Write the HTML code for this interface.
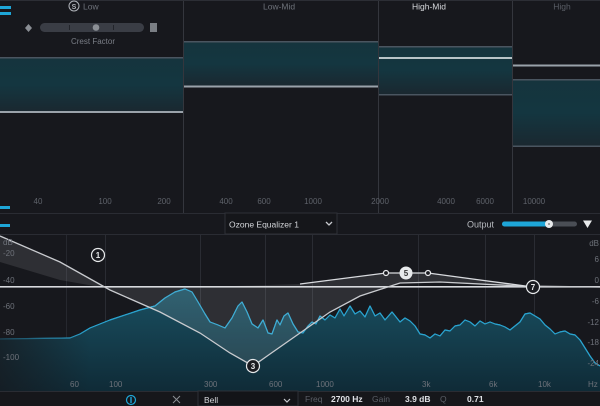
<!DOCTYPE html>
<html><head><meta charset="utf-8"><style>
html,body{margin:0;padding:0;background:#17181d;width:600px;height:406px;overflow:hidden}
svg{display:block}
text{font-family:"Liberation Sans",sans-serif}
</style></head><body>
<svg width="600" height="406" viewBox="0 0 600 406" xmlns="http://www.w3.org/2000/svg">
<defs>
<linearGradient id="band" x1="0" y1="0" x2="0" y2="1">
<stop offset="0" stop-color="#15343d"/><stop offset="0.5" stop-color="#143640"/><stop offset="1" stop-color="#1a2830"/>
</linearGradient>
<linearGradient id="spec" x1="0" y1="0" x2="0" y2="1">
<stop offset="0" stop-color="#1a5062"/><stop offset="1" stop-color="#0f2b37"/>
</linearGradient>
<linearGradient id="specl" x1="0" y1="0" x2="1" y2="0">
<stop offset="0" stop-color="#17181d" stop-opacity="0.7"/><stop offset="0.15" stop-color="#17181d" stop-opacity="0"/>
</linearGradient>
</defs>
<rect width="600" height="406" fill="#17181d"/>
<rect x="0" y="58" width="183" height="54" fill="url(#band)"/>
<rect x="0" y="57" width="183" height="1.5" fill="#4a5560"/>
<rect x="0" y="111" width="183" height="2" fill="#9aa2aa"/>
<rect x="183" y="42" width="195" height="44" fill="url(#band)"/>
<rect x="183" y="41" width="195" height="1.5" fill="#4a5560"/>
<rect x="183" y="85.5" width="195" height="2" fill="#9aa2aa"/>
<rect x="378" y="47" width="134" height="47" fill="url(#band)"/>
<rect x="378" y="46" width="134" height="1.5" fill="#4a5560"/>
<rect x="378" y="57" width="134" height="2" fill="#b8c4c8"/>
<rect x="378" y="94" width="134" height="1.5" fill="#4a5560"/>
<rect x="512" y="80" width="88" height="66" fill="url(#band)"/>
<rect x="512" y="64.5" width="88" height="2" fill="#9aa2aa"/>
<rect x="512" y="79" width="88" height="1.5" fill="#4a5560"/>
<rect x="512" y="145.5" width="88" height="1.5" fill="#4a5560"/>
<g fill="#34363d"><rect x="183" y="0" width="1" height="213"/><rect x="378" y="0" width="1" height="213"/><rect x="512" y="0" width="1" height="213"/></g>
<rect x="0" y="0" width="600" height="1" fill="#2c2e35"/>
<rect x="0" y="6" width="11" height="3" fill="#1ea6d8"/><rect x="0" y="12" width="11" height="3" fill="#1ea6d8"/>
<rect x="0" y="206" width="10" height="3" fill="#1ea6d8"/><rect x="0" y="224" width="10" height="3" fill="#1ea6d8"/>
<circle cx="74" cy="6" r="5" fill="none" stroke="#b0b4ba" stroke-width="1"/>
<text x="74" y="9" font-size="7" fill="#b0b4ba" text-anchor="middle" font-weight="bold">S</text>
<text x="83" y="9.5" font-size="8.5" fill="#6e727a">Low</text>
<text x="263" y="9.5" font-size="8.5" fill="#6e727a">Low-Mid</text>
<text x="429" y="9.5" font-size="8.5" fill="#d8dade" text-anchor="middle">High-Mid</text>
<text x="562" y="9.5" font-size="8.5" fill="#5a5e66" text-anchor="middle">High</text>
<path d="M28.5 24 L32 28 L28.5 32 L25 28Z" fill="#8a8e94"/>
<rect x="40" y="23" width="104" height="9" rx="4.5" fill="#3a3d45"/>
<rect x="69" y="25" width="1" height="5" fill="#22242a"/><rect x="113" y="25" width="1" height="5" fill="#22242a"/>
<circle cx="96" cy="27.5" r="3.3" fill="#8c9096"/>
<rect x="150" y="23" width="7" height="9" fill="#7a7e84"/>
<text x="93" y="44" font-size="8" fill="#7a7e86" text-anchor="middle">Crest Factor</text>
<g font-size="8" fill="#5e626a" text-anchor="middle">
<text x="38" y="204">40</text><text x="105" y="204">100</text><text x="164" y="204">200</text>
<text x="226" y="204">400</text><text x="264" y="204">600</text><text x="313" y="204">1000</text>
<text x="380" y="204">2000</text><text x="446" y="204">4000</text><text x="485" y="204">6000</text><text x="534" y="204">10000</text>
</g>
<rect x="0" y="213" width="600" height="1" fill="#2a2c33"/>
<rect x="0" y="234" width="600" height="1" fill="#2a2c33"/>
<rect x="225" y="213" width="112" height="21" fill="#15161a" stroke="#2e3037" stroke-width="1"/>
<text x="229" y="227.5" font-size="8.5" fill="#d4d6da">Ozone Equalizer 1</text>
<path d="M326 222 L329 225 L332 222" fill="none" stroke="#c8cacf" stroke-width="1.3"/>
<text x="467" y="227.5" font-size="9" fill="#b8bbc0">Output</text>
<rect x="502" y="221.5" width="75" height="5" rx="2.5" fill="#4a4e55"/>
<rect x="502" y="221.5" width="47" height="5" rx="2.5" fill="#1ea6d8"/>
<circle cx="549" cy="224" r="4" fill="#e8eaec"/><circle cx="549" cy="224" r="1" fill="#888"/>
<path d="M583 220.5 L592 220.5 L587.5 228Z" fill="#e8eaec"/>
<rect x="0" y="235" width="600" height="156" fill="#17181d"/>
<g fill="#2a2c33"><rect x="66" y="235" width="1" height="156"/><rect x="105" y="235" width="1" height="156"/><rect x="200" y="235" width="1" height="156"/><rect x="265" y="235" width="1" height="156"/><rect x="312" y="235" width="1" height="156"/><rect x="418" y="235" width="1" height="156"/><rect x="485" y="235" width="1" height="156"/><rect x="534" y="235" width="1" height="156"/></g>
<path id="sp" d="M0 339 L70 338 L80 334 L90 328 L110 320 L140 310 L155 306 L165 298 L175 292 L185 289 L192 292 L198 302 L205 314 L210 322 L218 325 L225 328 L232 318 L238 306 L242 302 L247 312 L252 324 L258 328 L263 320 L268 333 L272 334 L277 320 L280 325 L284 316 L288 313 L293 324 L298 332 L303 333 L308 326 L312 322 L316 324 L320 316 L325 320 L330 315 L335 318 L340 309 L344 316 L350 306 L355 314 L360 311 L365 317 L370 306 L375 316 L380 313 L385 320 L392 312 L396 317 L400 322 L405 318 L410 321 L415 326 L420 334 L425 335 L430 338 L435 334 L440 336 L445 330 L450 331 L455 326 L460 325 L465 320 L470 322 L475 326 L480 321 L485 324 L490 322 L495 324 L500 325 L505 327 L510 330 L515 326 L520 322 L525 314 L530 313 L535 316 L540 319 L545 325 L550 329 L555 334 L560 332 L565 331 L570 334 L575 335 L580 340 L585 348 L590 356 L595 363 L600 366" fill="none" stroke="#2aa3cf" stroke-width="1.2" stroke-linejoin="round"/>
<path d="M0 339 L70 338 L80 334 L90 328 L110 320 L140 310 L155 306 L165 298 L175 292 L185 289 L192 292 L198 302 L205 314 L210 322 L218 325 L225 328 L232 318 L238 306 L242 302 L247 312 L252 324 L258 328 L263 320 L268 333 L272 334 L277 320 L280 325 L284 316 L288 313 L293 324 L298 332 L303 333 L308 326 L312 322 L316 324 L320 316 L325 320 L330 315 L335 318 L340 309 L344 316 L350 306 L355 314 L360 311 L365 317 L370 306 L375 316 L380 313 L385 320 L392 312 L396 317 L400 322 L405 318 L410 321 L415 326 L420 334 L425 335 L430 338 L435 334 L440 336 L445 330 L450 331 L455 326 L460 325 L465 320 L470 322 L475 326 L480 321 L485 324 L490 322 L495 324 L500 325 L505 327 L510 330 L515 326 L520 322 L525 314 L530 313 L535 316 L540 319 L545 325 L550 329 L555 334 L560 332 L565 331 L570 334 L575 335 L580 340 L585 348 L590 356 L595 363 L600 366 L600 391 L0 391Z" fill="url(#spec)"/>
<use href="#sp"/>
<rect x="0" y="235" width="600" height="156" fill="url(#specl)"/>
<path d="M0 236 L60 262 L110 290 L160 312 L200 333 L230 353 L253 366 L270 354 L300 333 L330 312 L360 296 L400 283 L440 282 L520 286 L600 287 L533 287 L480 280 L428 273 L386 273 L300 284 L200 287 L100 287 L60 280 L0 262Z" fill="#ffffff" fill-opacity="0.1"/>
<rect x="0" y="286" width="600" height="1.6" fill="#d8dade"/>
<path d="M0 236 L60 262 L110 290 L160 312 L200 333 L230 353 L253 366 L270 354 L300 333 L330 312 L360 296 L400 283 L440 282 L520 286 L600 287" fill="none" stroke="#c9cbcf" stroke-width="1.3"/>
<path d="M300 284 L386 273 L428 273 L480 280 L533 287" fill="none" stroke="#d8dade" stroke-width="1.3"/>
<g stroke="#e8eaec" stroke-width="1.2">
<circle cx="98" cy="255" r="6.5" fill="#1a1b20"/>
<circle cx="253" cy="366" r="6.5" fill="#1a1b20"/>
<circle cx="533" cy="287" r="6.5" fill="#1a1b20"/>
<circle cx="386" cy="273" r="2.5" fill="#1a1b20"/><circle cx="428" cy="273" r="2.5" fill="#1a1b20"/>
</g>
<circle cx="406" cy="273" r="6.5" fill="#e8eaec"/>
<g font-size="8" text-anchor="middle" font-weight="bold">
<text x="98" y="258" fill="#e8eaec">1</text><text x="253" y="369" fill="#e8eaec">3</text>
<text x="533" y="290" fill="#e8eaec">7</text><text x="406" y="276" fill="#333">5</text>
</g>
<g font-size="8" fill="#6e727a">
<text x="3" y="245">dB</text><text x="3" y="256">-20</text><text x="3" y="283">-40</text><text x="3" y="309">-60</text><text x="3" y="335">-80</text><text x="3" y="360">-100</text>
</g>
<g font-size="8" fill="#6e727a" text-anchor="end">
<text x="599" y="246">dB</text><text x="599" y="262">6</text><text x="599" y="283">0</text><text x="599" y="304">-6</text><text x="599" y="325">-12</text><text x="599" y="345">-18</text><text x="599" y="366">-24</text>
</g>
<g font-size="8" fill="#6e727a">
<text x="70" y="387">60</text><text x="109" y="387">100</text><text x="204" y="387">300</text><text x="269" y="387">600</text><text x="316" y="387">1000</text><text x="422" y="387">3k</text><text x="489" y="387">6k</text><text x="538" y="387">10k</text><text x="588" y="387">Hz</text>
</g>
<rect x="0" y="391" width="600" height="15" fill="#16171b"/>
<rect x="0" y="391" width="600" height="1" fill="#2a2c33"/>
<circle cx="131" cy="400" r="4.5" fill="none" stroke="#1ea6d8" stroke-width="1.2"/><rect x="130.3" y="397" width="1.4" height="6" fill="#1ea6d8"/>
<path d="M173 396 L180 403 M180 396 L173 403" stroke="#8a8e94" stroke-width="1"/>
<rect x="198" y="391" width="100" height="15" fill="#131418" stroke="#2e3037"/>
<text x="204" y="403" font-size="8.5" fill="#d4d6da">Bell</text>
<path d="M284 399 L287 402 L290 399" fill="none" stroke="#c8cacf" stroke-width="1.2"/>
<text x="305" y="402" font-size="8.5" fill="#5a5e66">Freq</text>
<text x="331" y="402" font-size="8.5" fill="#e0e2e6" font-weight="bold">2700 Hz</text>
<text x="372" y="402" font-size="8.5" fill="#5a5e66">Gain</text>
<text x="405" y="402" font-size="8.5" fill="#e0e2e6" font-weight="bold">3.9 dB</text>
<text x="440" y="402" font-size="8.5" fill="#5a5e66">Q</text>
<text x="467" y="402" font-size="8.5" fill="#e0e2e6" font-weight="bold">0.71</text>
</svg>
</body></html>
